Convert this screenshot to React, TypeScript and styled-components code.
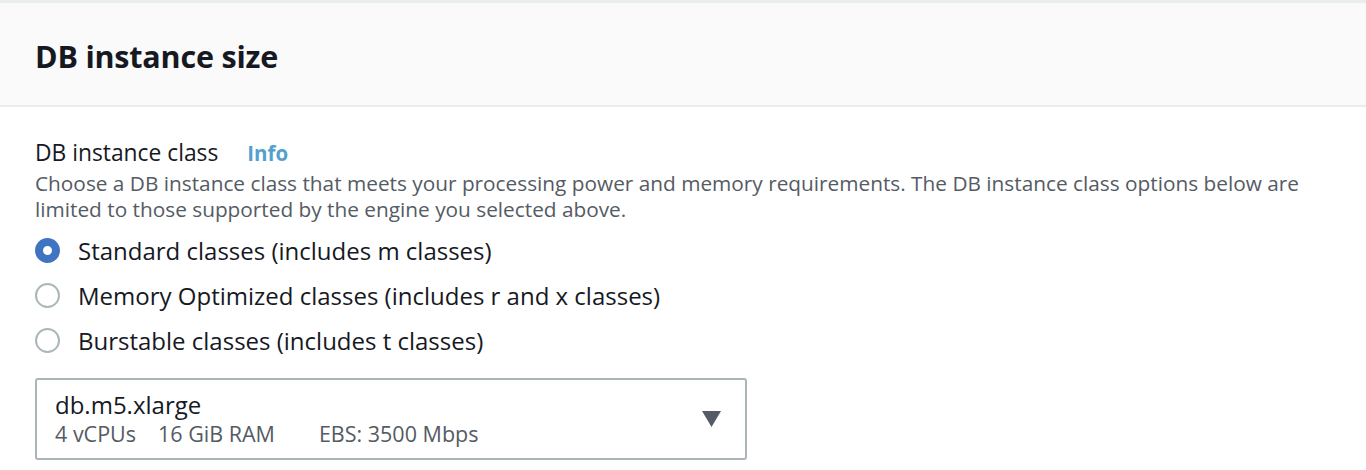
import styled, { createGlobalStyle } from 'styled-components';

const GlobalStyle = createGlobalStyle`
  html, body {
    margin: 0;
    padding: 0;
    background: #ffffff;
    font-family: "Open Sans", "Noto Sans", Arial, sans-serif;
    color: #16191f;
  }
`;

const Panel = styled.section`
  width: 1366px;
  height: 470px;
  overflow: hidden;
  border-top: 3px solid #eaeded;
  box-sizing: border-box;
`;

const Header = styled.header`
  height: 104px;
  background: #fafafa;
  border-bottom: 2px solid #eaeded;
  display: flex;
  align-items: center;
  padding: 0 35px;
  box-sizing: border-box;
`;

const Title = styled.h2`
  margin: 0;
  padding-top: 4px;
  font-size: 30.5px;
  font-weight: 700;
  color: #16191f;
  letter-spacing: -0.2px;
`;

const Body = styled.div`
  padding: 30px 35px 0;
  display: flex;
  flex-direction: column;
`;

const Label = styled.div`
  display: flex;
  align-items: baseline;
  gap: 29px;
  font-size: 22.8px;
  line-height: 32px;
  color: #16191f;
`;

const InfoLink = styled.a`
  font-size: 20.5px;
  font-weight: 700;
  color: #559fce;
  text-decoration: none;
`;

const Description = styled.p`
  margin: 1px 0 0;
  font-size: 20.8px;
  line-height: 26px;
  color: #545b64;
  max-width: 1300px;
`;

const RadioGroup = styled.div`
  display: flex;
  flex-direction: column;
  margin-top: 6px;
`;

const RadioRow = styled.label`
  display: flex;
  align-items: center;
  gap: 18px;
  height: 45px;
  font-size: 24px;
  color: #16191f;
`;

const RadioDot = styled.span<{ $checked?: boolean }>`
  width: 25px;
  height: 25px;
  border-radius: 50%;
  box-sizing: border-box;
  flex-shrink: 0;
  background: #ffffff;
  border: ${(p) => (p.$checked ? '8px solid #3f74c2' : '2px solid #aab7b8')};
`;

const Select = styled.div`
  margin-top: 15px;
  width: 712px;
  height: 82px;
  flex-shrink: 0;
  box-sizing: border-box;
  border: 2px solid #aab7b8;
  border-radius: 3px;
  display: flex;
  align-items: center;
  justify-content: space-between;
  padding: 0 24px 0 18px;
`;

const SelectText = styled.div`
  display: flex;
  flex-direction: column;
`;

const SelectValue = styled.div`
  font-size: 24px;
  line-height: 30px;
  color: #16191f;
`;

const SelectMeta = styled.div`
  display: flex;
  font-size: 21.5px;
  line-height: 28px;
  color: #545b64;
`;

const MetaItem = styled.span<{ $gap: number }>`
  margin-right: ${(p) => p.$gap}px;
`;

const options = [
  { label: 'Standard classes (includes m classes)', checked: true },
  { label: 'Memory Optimized classes (includes r and x classes)', checked: false },
  { label: 'Burstable classes (includes t classes)', checked: false },
];

export default function App() {
  return (
    <>
      <GlobalStyle />
      <Panel>
        <Header>
          <Title>DB instance size</Title>
        </Header>
        <Body>
          <Label>
            DB instance class <InfoLink href="#">Info</InfoLink>
          </Label>
          <Description>
            Choose a DB instance class that meets your processing power and memory requirements. The DB
            instance class options below are limited to those supported by the engine you selected above.
          </Description>
          <RadioGroup>
            {options.map((o) => (
              <RadioRow key={o.label}>
                <RadioDot $checked={o.checked} />
                {o.label}
              </RadioRow>
            ))}
          </RadioGroup>
          <Select>
            <SelectText>
              <SelectValue>db.m5.xlarge</SelectValue>
              <SelectMeta>
                <MetaItem $gap={22}>4 vCPUs</MetaItem>
                <MetaItem $gap={44}>16 GiB RAM</MetaItem>
                <MetaItem $gap={0}>EBS: 3500 Mbps</MetaItem>
              </SelectMeta>
            </SelectText>
            <svg width="19" height="16" viewBox="0 0 19 16">
              <path d="M0 0 H19 L9.5 16 Z" fill="#545b64" />
            </svg>
          </Select>
        </Body>
      </Panel>
    </>
  );
}
